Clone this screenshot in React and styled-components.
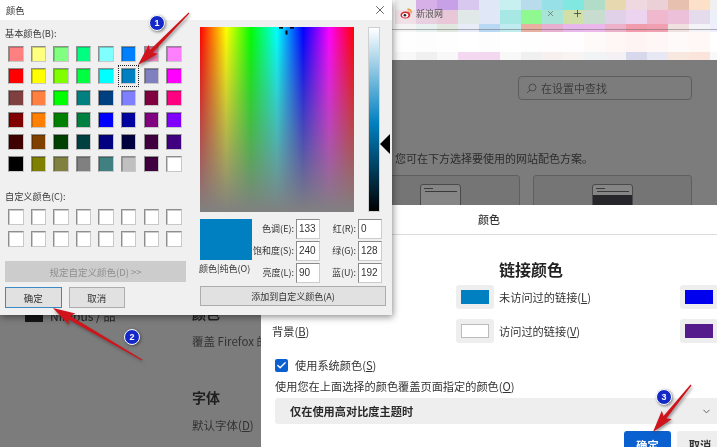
import React from "react";
import styled, { createGlobalStyle } from "styled-components";
import { Check, ChevronDown, Plus, X } from "lucide-react";

const BASIC_COLORS = [
  "#ff8080", "#ffff80", "#80ff80", "#00ff80", "#80ffff", "#0080ff", "#ff80c0", "#ff80ff",
  "#ff0000", "#ffff00", "#80ff00", "#00ff40", "#00ffff", "#0080c0", "#8080c0", "#ff00ff",
  "#804040", "#ff8040", "#00ff00", "#008080", "#004080", "#8080ff", "#800040", "#ff0080",
  "#800000", "#ff8000", "#008000", "#008040", "#0000ff", "#0000a0", "#800080", "#8000ff",
  "#400000", "#804000", "#004000", "#004040", "#000080", "#000040", "#400040", "#400080",
  "#000000", "#808000", "#808040", "#808080", "#408080", "#c0c0c0", "#400040", "#ffffff"
];

// pixelated strip above the settings page, one list per row
const MOSAIC = [
  ["#eef0f0", "#d8b0e8", "#c8a0e8", "#d8c8f0", "#e0e8f8", "#c8f0f0", "#b8dcec", "#98e0e8", "#80e8e0", "#b0dcc8", "#e8d8b0", "#f0d8e0", "#ecd0d8", "#e8c0b0", "#fce0c8", "#f0f0f0"],
  ["#f0e0e8", "#e8d0e0", "#e8c8d8", "#e0e8e8", "#e0e8f8", "#a8e8e4", "#90f890", "#a8e4d8", "#d0e0a8", "#c8dcd0", "#e0d0e8", "#ecd4f0", "#f0b8cc", "#ecc0d8", "#e4dcec", "#ecf0f8"],
  ["#f4f4f4", "#e8f0f0", "#e0e8e0", "#e8ecf8", "#b8d8f4", "#c0ecf0", "#e8b0a0", "#e8b0d0", "#e8b8ec", "#ecb8ec", "#ecb0c8", "#f09cac", "#f0a0b0", "#f0e0e0", "#f4f4f8", "#eeeeff"],
  ["#fefefe", "#fdfdfd", "#fefefe", "#ffffff", "#fdfdfd", "#ffffff", "#fefefe", "#fffdfd", "#fffdfd", "#fffafa", "#fff6f6", "#fff4f4", "#fff6f6", "#fffafa", "#fff8f6", "#ffffff"],
  ["#f8f8f8", "#f0f0f0", "#f8f8f8", "#f4d8f0", "#f4d8f0", "#f8f8f8", "#f0f0f0", "#f8f0f0", "#f8f4f4", "#f0f4f4", "#f4f0f4", "#d8d8ec", "#e8e8f4", "#f8e8e0", "#fbe4dc", "#f8f8f8"]
];

const HSL_FIELDS = [
  { label: "色调(E):", value: 133, label2: "红(R):", value2: 0 },
  { label: "饱和度(S):", value: 240, label2: "绿(G):", value2: 128 },
  { label: "亮度(L):", value: 90, label2: "蓝(U):", value2: 192 }
];

function arrowPoints(x1, y1, x2, y2) {
  const len = Math.hypot(x2 - x1, y2 - y1);
  const dx = (x2 - x1) / len;
  const dy = (y2 - y1) / len;
  const nx = -dy;
  const ny = dx;
  const bx = x2 - dx * 19;
  const by = y2 - dy * 19;
  const pts = [
    [x1 + nx * 0.6, y1 + ny * 0.6],
    [bx + nx * 1.9, by + ny * 1.9],
    [bx + nx * 6.5 - dx * 3, by + ny * 6.5 - dy * 3],
    [x2, y2],
    [bx - nx * 6.5 - dx * 3, by - ny * 6.5 - dy * 3],
    [bx - nx * 1.9, by - ny * 1.9],
    [x1 - nx * 0.6, y1 - ny * 0.6]
  ];
  return pts.map(p => p.map(v => v.toFixed(1)).join(",")).join(" ");
}

export default function App() {
  return (
    <Screen>
      <GlobalStyle />
      <Chrome>
        <Mosaic>
          {MOSAIC.flat().map((c, i) => (
            <Tile key={i} color={c} />
          ))}
        </Mosaic>
        <TabStrip>
          <svg width="12" height="11" viewBox="0 0 12 11">
            <ellipse cx="5.4" cy="7" rx="4.9" ry="3.6" fill="#d8262c" />
            <ellipse cx="5.2" cy="7.2" rx="3.1" ry="2.3" fill="#fff" />
            <circle cx="4.9" cy="7.3" r="1.3" fill="#222" />
            <path d="M7.4 1.2 C10 0.8 11.8 2.8 11 5.4" fill="none" stroke="#f08c1e" strokeWidth="1.2" />
            <path d="M7.6 3 C8.8 2.8 9.6 3.6 9.4 4.8" fill="none" stroke="#f08c1e" strokeWidth="1" />
          </svg>
          <TabTitle>新浪网</TabTitle>
          <TabClose>
            <X size={9} strokeWidth={1.4} />
          </TabClose>
          <TabNew>
            <Plus size={11} strokeWidth={1.6} />
          </TabNew>
        </TabStrip>
      </Chrome>

      <Page>
        <Sidebar>
          <NavIcon />
          <NavText>Nimbus / 品</NavText>
        </Sidebar>
        <Main>
          <SearchBox>
            <svg width="11" height="11" viewBox="0 0 11 11" fill="none" stroke="#4a4a4a" strokeWidth="1">
              <circle cx="6.5" cy="4.5" r="3.5" />
              <path d="M4 7 L1 10" />
            </svg>
            在设置中查找
          </SearchBox>
          <Intro>您可在下方选择要使用的网站配色方案。</Intro>
          <Cards>
            <Card />
            <Card>
              <MiniWindow />
            </Card>
            <Card>
              <MiniWindow dark />
            </Card>
          </Cards>
          <SectionTitle>颜色</SectionTitle>
          <SectionText>覆盖 Firefox 的</SectionText>
          <SectionTitle second>字体</SectionTitle>
          <SectionText>
            默认字体(<u>D</u>)
          </SectionText>
        </Main>
      </Page>

      <LinkDialog>
        <LinkHeader>颜色</LinkHeader>
        <LinkBody>
          <LinkHeading>链接颜色</LinkHeading>
          <LinkRow>
            <span />
            <LinkCell>
              <ColorButton color="#0080c0" />
              <span>
                未访问过的链接(<u>L</u>)
              </span>
            </LinkCell>
            <ColorButton color="#0000ee" />
          </LinkRow>
          <LinkRow>
            <span>
              背景(<u>B</u>)
            </span>
            <LinkCell>
              <ColorButton color="#ffffff" outlined />
              <span>
                访问过的链接(<u>V</u>)
              </span>
            </LinkCell>
            <ColorButton color="#551a8b" />
          </LinkRow>
          <CheckRow>
            <CheckBox>
              <Check size={11} strokeWidth={3} color="#fff" />
            </CheckBox>
            <span>
              使用系统颜色(<u>S</u>)
            </span>
          </CheckRow>
          <OverrideLabel>
            使用您在上面选择的颜色覆盖页面指定的颜色(<u>O</u>)
          </OverrideLabel>
          <SelectBox>
            仅在使用高对比度主题时
            <ChevronDown size={11} color="#555" />
          </SelectBox>
          <Footer>
            <PrimaryButton>确定</PrimaryButton>
            <GhostButton>取消</GhostButton>
          </Footer>
        </LinkBody>
      </LinkDialog>

      <ColorDialog>
        <TitleBar>
          颜色
          <X size={14} strokeWidth={1.3} color="#333" />
        </TitleBar>
        <DialogBody>
          <LeftCol>
            <SmallLabel>基本颜色(B):</SmallLabel>
            <SwatchGrid>
              {BASIC_COLORS.map((c, i) => (
                <Swatch key={i} color={c} selected={i === 13} />
              ))}
            </SwatchGrid>
            <SmallLabel custom>自定义颜色(C):</SmallLabel>
            <SwatchGrid>
              {Array.from({ length: 16 }).map((_, i) => (
                <Swatch key={i} color="#ffffff" />
              ))}
            </SwatchGrid>
            <DefineButton>规定自定义颜色(D) &gt;&gt;</DefineButton>
            <ButtonRow>
              <WinButton isDefault>确定</WinButton>
              <WinButton>取消</WinButton>
            </ButtonRow>
          </LeftCol>
          <RightCol>
            <PickerRow>
              <Spectrum>
                <Crosshair>
                  <svg width="18" height="10" viewBox="0 0 18 10" fill="#000">
                    <rect x="0" y="0" width="4" height="1.6" />
                    <rect x="11" y="0" width="4" height="1.6" />
                    <rect x="6.5" y="3.5" width="2" height="4" />
                  </svg>
                </Crosshair>
              </Spectrum>
              <LumBar />
              <LumPointer />
            </PickerRow>
            <ValueRow>
              <PreviewCol>
                <Preview />
                <PreviewLabel>颜色|纯色(O)</PreviewLabel>
              </PreviewCol>
              <FieldGrid>
                {HSL_FIELDS.map(f => (
                  <React.Fragment key={f.label}>
                    <FieldLabel>{f.label}</FieldLabel>
                    <FieldInput>{f.value}</FieldInput>
                    <FieldLabel>{f.label2}</FieldLabel>
                    <FieldInput>{f.value2}</FieldInput>
                  </React.Fragment>
                ))}
              </FieldGrid>
            </ValueRow>
            <AddButton>添加到自定义颜色(A)</AddButton>
          </RightCol>
        </DialogBody>
      </ColorDialog>

      <ArrowLayer width="717" height="447" viewBox="0 0 717 447">
        <polygon points={arrowPoints(189, 13, 138, 65)} />
        <polygon points={arrowPoints(142, 360, 53, 308)} />
        <polygon points={arrowPoints(691, 385, 653, 432)} />
      </ArrowLayer>
      <Badge x={157} y={23}>1</Badge>
      <Badge x={132} y={337}>2</Badge>
      <Badge x={664} y={397}>3</Badge>
    </Screen>
  );
}

const GlobalStyle = createGlobalStyle`
  html, body {
    margin: 0;
    padding: 0;
    background: #7c7c7c;
  }
  * {
    box-sizing: border-box;
  }
`;

const Screen = styled.div`
  position: relative;
  width: 717px;
  height: 447px;
  overflow: hidden;
  display: flex;
  flex-direction: column;
  background: #7c7c7c;
  font-family: "Noto Sans CJK SC", "Liberation Sans", sans-serif;
  filter: blur(0.4px);
`;

const Chrome = styled.div`
  position: relative;
  height: 60px;
  flex: none;
  background: #fff;
`;

const Mosaic = styled.div`
  display: grid;
  height: 60px;
  padding-left: 395px;
  grid-template-columns: repeat(16, 21px);
  grid-template-rows: 10px 14px 8px 20px 8px;
`;

const Tile = styled.div`
  background: ${props => props.color};
`;

const TabStrip = styled.div`
  position: absolute;
  left: 400px;
  right: 0;
  top: 8px;
  height: 22px;
  display: flex;
  align-items: flex-start;
  gap: 4px;
  &::after {
    content: "";
    position: absolute;
    left: -8px;
    right: 0;
    top: 21px;
    height: 1px;
    background: rgba(90, 90, 90, 0.45);
  }
`;

const TabTitle = styled.span`
  font-size: 9px;
  line-height: 12px;
  color: #555;
  width: 126px;
`;

const TabClose = styled.span`
  display: flex;
  margin-top: 1px;
  color: #444;
`;

const TabNew = styled.span`
  display: flex;
  margin-left: 13px;
  color: #333;
`;

const Page = styled.div`
  flex: 1;
  display: flex;
  background: #7c7c7c;
  color: #2c2c2c;
`;

const Sidebar = styled.div`
  width: 192px;
  flex: none;
  padding: 250px 0 0 25px;
  display: flex;
  align-items: flex-start;
  gap: 7px;
`;

const NavIcon = styled.div`
  width: 18px;
  height: 12px;
  background: #151515;
`;

const NavText = styled.div`
  font-size: 12px;
  line-height: 12px;
  color: #222;
`;

const Main = styled.div`
  width: 500px;
  padding-top: 16px;
  display: flex;
  flex-direction: column;
`;

const SearchBox = styled.div`
  align-self: flex-end;
  width: 174px;
  height: 24px;
  padding-left: 7px;
  display: flex;
  align-items: center;
  gap: 4px;
  border: 1px solid #5c5c5c;
  border-radius: 4px;
  font-size: 11px;
  color: #3c3c3c;
`;

const Intro = styled.div`
  margin-top: 49px;
  padding-left: 203px;
  height: 18px;
  font-size: 11px;
  line-height: 18px;
  color: #2c2c2c;
  white-space: nowrap;
`;

const Cards = styled.div`
  margin: 8px 0 0 -3px;
  display: grid;
  grid-template-columns: repeat(3, 159px);
  gap: 13px;
  height: 105px;
`;

const Card = styled.div`
  height: 105px;
  padding-top: 8px;
  display: flex;
  justify-content: center;
  border: 1px solid #5f5f5f;
  border-radius: 3px;
  background: #757575;
`;

const MiniWindow = styled.div`
  width: 41px;
  height: 40px;
  border: 1px solid #4a4a4a;
  border-radius: 3px;
  background-repeat: no-repeat;
  background-image: linear-gradient(#3a3a3a, #3a3a3a), linear-gradient(#3a3a3a, #3a3a3a),
    linear-gradient(#858585, #858585),
    linear-gradient(${props => (props.dark ? "#27272b, #27272b" : "#868686, #868686")});
  background-size: 9px 1px, 32px 1px, 100% 10px, 100% 100%;
  background-position: 3px 3px, 4px 6px, 0 0, 0 0;
`;

const SectionTitle = styled.div`
  margin-top: ${props => (props.second ? "37px" : "23px")};
  font-size: 14px;
  line-height: 20px;
  font-weight: 700;
  color: #1f1f1f;
`;

const SectionText = styled.div`
  margin-top: 9px;
  font-size: 11.5px;
  line-height: 18px;
  color: #333;
`;

const LinkDialog = styled.div`
  position: absolute;
  left: 261px;
  top: 205px;
  width: 476px;
  height: 270px;
  background: #fff;
  color: #333;
  font-size: 11.2px;
`;

const LinkHeader = styled.div`
  height: 30px;
  padding: 0 20px 2px 0;
  display: flex;
  align-items: center;
  justify-content: center;
  border-bottom: 1px solid #ddd;
  font-size: 11px;
  font-weight: 500;
  color: #333;
`;

const LinkBody = styled.div`
  padding: 22px 14px 0;
  display: flex;
  flex-direction: column;
`;

const LinkHeading = styled.div`
  margin-left: 224px;
  height: 24px;
  font-size: 16px;
  line-height: 24px;
  font-weight: 700;
  color: #222;
`;

const LinkRow = styled.div`
  margin: 4px 0 6px -3px;
  display: grid;
  grid-template-columns: 184px 224px 38px;
  align-items: center;
  height: 24px;
`;

const LinkCell = styled.div`
  display: flex;
  align-items: center;
  gap: 5px;
`;

const ColorButton = styled.div`
  width: 38px;
  height: 24px;
  padding: 5px 5px;
  display: flex;
  border-radius: 3px;
  background: #eeeeee;
  &::before {
    content: "";
    flex: 1;
    background: ${props => props.color};
    border: ${props => (props.outlined ? "1px solid #bbb" : "none")};
  }
`;

const CheckRow = styled.div`
  margin-top: 9px;
  height: 14px;
  display: flex;
  align-items: center;
  gap: 7px;
`;

const CheckBox = styled.div`
  width: 13px;
  height: 13px;
  display: flex;
  align-items: center;
  justify-content: center;
  border-radius: 2px;
  background: #0a60d0;
`;

const OverrideLabel = styled.div`
  margin-top: 7px;
  height: 14px;
  line-height: 14px;
`;

const SelectBox = styled.div`
  margin-top: 5px;
  height: 26px;
  padding: 0 11px 0 15px;
  display: flex;
  align-items: center;
  justify-content: space-between;
  border-radius: 3px;
  background: #eeeeee;
  font-weight: 700;
  color: #2a2a2a;
`;

const Footer = styled.div`
  margin-top: 7px;
  display: flex;
  justify-content: flex-end;
  gap: 6px;
`;

const PrimaryButton = styled.div`
  width: 47px;
  height: 30px;
  padding-top: 6px;
  text-align: center;
  border-radius: 3px;
  background: #0a60cf;
  color: #fff;
  font-weight: 700;
`;

const GhostButton = styled(PrimaryButton)`
  width: 46px;
  background: #eeeeee;
  color: #333;
`;

const ColorDialog = styled.div`
  position: absolute;
  left: 0;
  top: 0;
  width: 392px;
  height: 315px;
  background: #f0f0f0;
  color: #333;
  font-size: 9.2px;
  box-shadow: 1px 2px 7px rgba(0, 0, 0, 0.45);
`;

const TitleBar = styled.div`
  height: 20px;
  padding: 0 5px 0 6px;
  display: flex;
  align-items: center;
  justify-content: space-between;
  background: #fff;
  font-size: 9.2px;
`;

const DialogBody = styled.div`
  display: flex;
`;

const LeftCol = styled.div`
  width: 200px;
  flex: none;
  padding: 6px 0 0 5px;
`;

const SmallLabel = styled.div`
  height: 14px;
  line-height: 14px;
  margin-top: ${props => (props.custom ? "17px" : "0")};
  color: #3a3a3a;
`;

const SwatchGrid = styled.div`
  margin: 6px 0 0 3px;
  display: grid;
  grid-template-columns: repeat(8, 15.5px);
  grid-auto-rows: 16px;
  column-gap: 7.1px;
  row-gap: 6px;
`;

const Swatch = styled.div`
  position: relative;
  background: ${props => props.color};
  border: 1px solid;
  border-color: #8e8e8e #c8c8c8 #c8c8c8 #8e8e8e;
  box-shadow: inset 1px 1px 0 rgba(0, 0, 0, 0.2);
  ${props =>
    props.selected &&
    `
    &::after {
      content: "";
      position: absolute;
      inset: -4px;
      border: 1px dotted #222;
    }
  `}
`;

const DefineButton = styled.div`
  margin-top: 14px;
  width: 181px;
  height: 21px;
  display: flex;
  align-items: center;
  justify-content: center;
  background: #cccccc;
  color: #8f8f8f;
  font-size: 9.5px;
`;

const ButtonRow = styled.div`
  margin-top: 5px;
  display: flex;
  gap: 7px;
`;

const WinButton = styled.div`
  width: 56.5px;
  height: 21px;
  display: flex;
  align-items: center;
  justify-content: center;
  background: #e1e1e1;
  border: ${props => (props.isDefault ? "1.5px solid #3b8ac4" : "1px solid #adadad")};
  font-size: 9.5px;
`;

const RightCol = styled.div`
  width: 186px;
  padding-top: 7px;
`;

const PickerRow = styled.div`
  position: relative;
  display: flex;
  gap: 14px;
  height: 185px;
`;

const Spectrum = styled.div`
  position: relative;
  width: 154px;
  height: 185px;
  background: linear-gradient(rgba(128, 128, 128, 0), #808080),
    linear-gradient(to right, #ff0000, #ffff00 17%, #00ff00 33%, #00ffff 50%, #0000ff 67%, #ff00ff 84%, #ff0000);
`;

const Crosshair = styled.div`
  position: absolute;
  left: 79px;
  top: 0;
  display: flex;
`;

const LumBar = styled.div`
  width: 12px;
  height: 185px;
  background: linear-gradient(#ffffff, #0080c0 52%, #000000);
  border: 1px solid #d0d0d0;
`;

const LumPointer = styled.div`
  position: absolute;
  left: 180px;
  top: 107px;
  width: 0;
  height: 0;
  border-style: solid;
  border-width: 10px 10px 10px 0;
  border-color: transparent #000 transparent transparent;
`;

const ValueRow = styled.div`
  margin-top: 7px;
  display: flex;
  height: 61px;
`;

const PreviewCol = styled.div`
  width: 52px;
  flex: none;
`;

const Preview = styled.div`
  width: 52px;
  height: 41px;
  background: #0080c0;
`;

const PreviewLabel = styled.div`
  margin: 2px 0 0 -1px;
  line-height: 14px;
  font-size: 9px;
  white-space: nowrap;
`;

const FieldGrid = styled.div`
  display: grid;
  grid-template-columns: 42px 24px 34px 24px;
  grid-auto-rows: 19.5px;
  column-gap: 2px;
  row-gap: 2.5px;
  align-items: center;
`;

const FieldLabel = styled.div`
  text-align: right;
  white-space: nowrap;
  font-size: 9px;
`;

const FieldInput = styled.div`
  height: 19.5px;
  padding: 0 2px;
  display: flex;
  align-items: center;
  background: #fff;
  border: 1px solid #8a8a8a;
  border-right-color: #ccc;
  border-bottom-color: #ccc;
  font-family: "Liberation Sans", sans-serif;
  font-size: 10px;
`;

const AddButton = styled.div`
  margin-top: 6px;
  width: 186px;
  height: 20px;
  display: flex;
  align-items: center;
  justify-content: center;
  background: #e1e1e1;
  border: 1px solid #adadad;
  font-size: 9px;
`;

const ArrowLayer = styled.svg`
  position: absolute;
  left: 0;
  top: 0;
  fill: #d0141c;
  filter: drop-shadow(1px 2px 1.5px rgba(60, 60, 60, 0.55));
`;

const Badge = styled.div`
  position: absolute;
  left: ${props => props.x - 8}px;
  top: ${props => props.y - 8}px;
  width: 16px;
  height: 16px;
  display: flex;
  align-items: center;
  justify-content: center;
  border: 1.5px solid #fff;
  border-radius: 50%;
  background: #1428c8;
  color: #fff;
  font-family: "Liberation Sans", sans-serif;
  font-size: 9px;
  font-weight: 700;
  box-shadow: 1px 1px 3px rgba(40, 40, 40, 0.6);
`;
